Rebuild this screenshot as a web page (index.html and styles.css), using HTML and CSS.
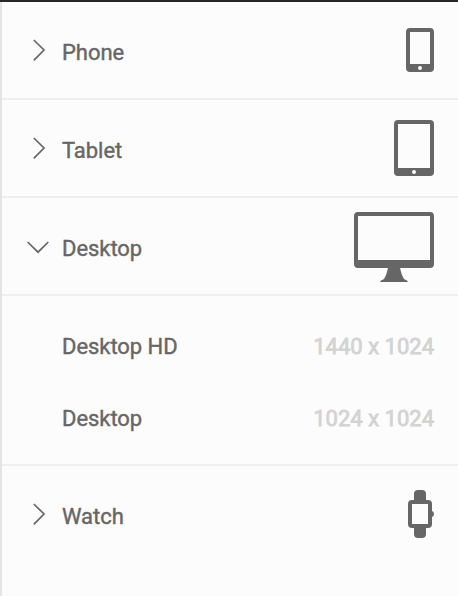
FILE: index.html
```html
<!DOCTYPE html>
<html lang="en">
<head>
<meta charset="utf-8">
<title>Frame presets</title>
<link rel="stylesheet" href="styles.css">
</head>
<body>
<div class="panel">
  <div class="row">
    <svg class="chevron" width="24" height="24" viewBox="0 0 24 24"><path d="M7.8 2 18 12 7.8 22.3"/></svg>
    <span class="label">Phone</span>
    <svg class="device" width="28" height="44" viewBox="0 0 28 44"><path fill-rule="evenodd" d="M4 0H24a4 4 0 0 1 4 4V40a4 4 0 0 1-4 4H4a4 4 0 0 1-4-4V4a4 4 0 0 1 4-4ZM4 4V36H24V4ZM14 38a2 2 0 1 0 0 4a2 2 0 1 0 0-4Z"/></svg>
  </div>
  <div class="row">
    <svg class="chevron" width="24" height="24" viewBox="0 0 24 24"><path d="M7.8 2 18 12 7.8 22.3"/></svg>
    <span class="label">Tablet</span>
    <svg class="device" width="40" height="56" viewBox="0 0 40 56"><path fill-rule="evenodd" d="M4 0H36a4 4 0 0 1 4 4V52a4 4 0 0 1-4 4H4a4 4 0 0 1-4-4V4a4 4 0 0 1 4-4ZM4 4V48H36V4ZM20 50a2 2 0 1 0 0 4a2 2 0 1 0 0-4Z"/></svg>
  </div>
  <div class="row">
    <svg class="chevron" width="24" height="24" viewBox="0 0 24 24"><path d="M1.7 8 12 18.2 22.3 8"/></svg>
    <span class="label">Desktop</span>
    <svg class="device" width="80" height="72" viewBox="0 0 80 72"><path fill-rule="evenodd" d="M4 2H76a4 4 0 0 1 4 4V54a4 4 0 0 1-4 4H4a4 4 0 0 1-4-4V6a4 4 0 0 1 4-4ZM4 6V50H76V6Z"/><path d="M34 58H46C47 62 48 66 50 69L53 70.5Q54 71 53.7 72H26.3Q26 71 27 70.5L30 69C32 66 33 62 34 58Z"/></svg>
  </div>
  <div class="presets">
    <div class="preset"><span class="label">Desktop HD</span><span class="size">1440 x 1024</span></div>
    <div class="preset"><span class="label">Desktop</span><span class="size">1024 x 1024</span></div>
  </div>
  <div class="row last">
    <svg class="chevron" width="24" height="24" viewBox="0 0 24 24"><path d="M7.8 2 18 12 7.8 22.3"/></svg>
    <span class="label">Watch</span>
    <svg class="device" width="26" height="48" viewBox="0 0 26 48"><path fill-rule="evenodd" d="M6 10V4a4 4 0 0 1 4-4H14a4 4 0 0 1 4 4V10H20a4 4 0 0 1 4 4V21Q26 21.5 26 24T24 27V34a4 4 0 0 1-4 4H18V44a4 4 0 0 1-4 4H10a4 4 0 0 1-4-4V38H4a4 4 0 0 1-4-4V14a4 4 0 0 1 4-4ZM4 14V34H20V14Z"/></svg>
  </div>
</div>
</body>
</html>
```
FILE: styles.css
```css
* {
  box-sizing: border-box;
}

body {
  margin: 0;
  background: #fcfcfc;
  font: 400 22px/26px Roboto, sans-serif;
  color: #666;
}

.panel {
  height: 596px;
  border-top: 2px solid #282627;
  background: linear-gradient(#e4e4e4, #e4e4e4) left / 2px 100% no-repeat;
  padding-left: 2px;
  overflow: hidden;
}

.row {
  display: flex;
  align-items: center;
  height: 98px;
  padding: 0 24px;
  border-bottom: 2px solid #eee;
}

.row.last {
  border-bottom-color: transparent;
}

.chevron {
  flex: none;
  margin-right: 12px;
  fill: none;
  stroke: #666;
  stroke-width: 1.7;
}

.label,
.size {
  padding-top: 6px;
  -webkit-text-stroke: 0.4px currentColor;
}

.label {
  letter-spacing: -0.05px;
}

.device {
  flex: none;
  margin-left: auto;
  fill: #666;
}

.presets {
  padding: 12px 0;
  border-bottom: 2px solid #eee;
}

.preset {
  display: flex;
  align-items: center;
  justify-content: space-between;
  height: 72px;
  padding: 0 24px 0 60px;
}

.size {
  color: #d3d3d3;
  -webkit-text-stroke-width: 0.8px;
}
```
